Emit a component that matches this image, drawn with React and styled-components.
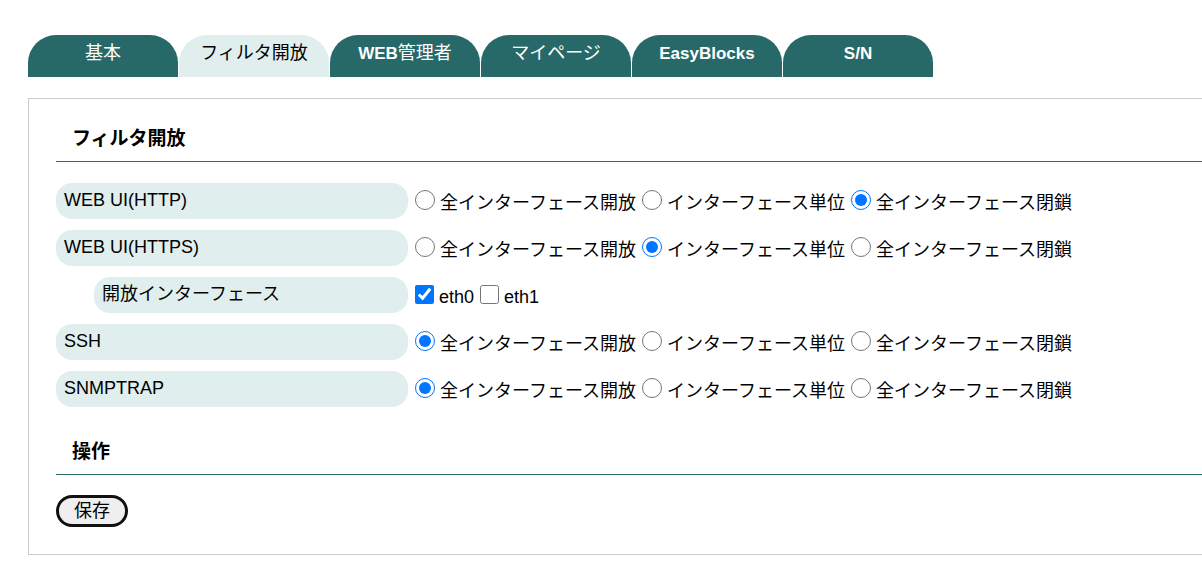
import React from "react";
import styled, { createGlobalStyle } from "styled-components";

const Global = createGlobalStyle`
  html, body { margin: 0; padding: 0; background: #fff; overflow: hidden; }
  body {
    font-family: "Liberation Sans", "Noto Sans CJK JP", sans-serif;
    color: #000;
  }
`;

const Page = styled.div`
  padding: 35px 0 0 28px;
  overflow: hidden;
`;

const TabBar = styled.div`
  display: flex;
  gap: 1px;
`;

const Tab = styled.div`
  width: 150px;
  height: 42px;
  box-sizing: border-box;
  padding-top: 8px;
  border-radius: 28px 28px 0 0;
  text-align: center;
  font-size: 18px;
  line-height: 21px;
  background: ${(p) => (p.$active ? "#e0eeed" : "#266968")};
  color: ${(p) => (p.$active ? "#000" : "#fff")};
`;

const Latin = styled.span`
  font-weight: bold;
  font-size: 17px;
`;

const Panel = styled.div`
  margin-top: 21px;
  border: 1px solid #cccccc;
  border-right: none;
  padding: 0 0 27px 27px;
  box-sizing: border-box;
`;

const Heading = styled.h2`
  margin: ${(p) => p.$top}px 0 ${(p) => p.$bottom}px;
  padding: 0 16px 11px;
  font-size: 19px;
  line-height: 22px;
  font-weight: bold;
  border-bottom: 1px solid #2b6f6c;
`;

const Rows = styled.div`
  display: flex;
  flex-direction: column;
  gap: 11px;
`;

const Row = styled.div`
  display: flex;
  align-items: flex-start;
  gap: 7px;
`;

const Label = styled.div`
  width: ${(p) => (p.$indent ? 314 : 352)}px;
  margin-left: ${(p) => (p.$indent ? 38 : 0)}px;
  height: 36px;
  flex-shrink: 0;
  box-sizing: border-box;
  padding: 6px 8px 0;
  border-radius: 16px;
  background: #e0eeed;
  font-size: 18px;
  line-height: 22px;
`;

const Options = styled.div`
  display: flex;
  gap: 6px;
  padding-top: 9px;
  font-size: 18px;
  line-height: 22px;
  white-space: nowrap;
`;

const Option = styled.label`
  display: flex;
  align-items: flex-start;
  gap: 5px;
`;

const Radio = styled.input.attrs({ type: "radio" })`
  width: 20px;
  height: 20px;
  margin: -2px 0 0 0;
`;

const Check = styled.input.attrs({ type: "checkbox" })`
  width: 19px;
  height: 19px;
  margin: -1px 0 0 0;
`;

const SaveButton = styled.button`
  width: 72px;
  height: 32px;
  border: 3px solid #111;
  border-radius: 16px;
  background: #efefef;
  font-family: "Liberation Sans", "Noto Sans CJK JP", sans-serif;
  font-size: 18px;
  line-height: 20px;
  padding: 0;
  color: #000;
`;

const modes = ["全インターフェース開放", "インターフェース単位", "全インターフェース閉鎖"];

function RadioRow({ name, label, value }) {
  return (
    <Row>
      <Label>{label}</Label>
      <Options>
        {modes.map((m, i) => (
          <Option key={m}>
            <Radio name={name} defaultChecked={i === value} />
            {m}
          </Option>
        ))}
      </Options>
    </Row>
  );
}

export default function App() {
  return (
    <>
      <Global />
      <Page>
        <TabBar>
          <Tab>基本</Tab>
          <Tab $active>フィルタ開放</Tab>
          <Tab><Latin>WEB</Latin>管理者</Tab>
          <Tab>マイページ</Tab>
          <Tab><Latin>EasyBlocks</Latin></Tab>
          <Tab><Latin>S/N</Latin></Tab>
        </TabBar>
        <Panel>
          <Heading $top={29} $bottom={21}>フィルタ開放</Heading>
          <Rows>
            <RadioRow name="http" label="WEB UI(HTTP)" value={2} />
            <RadioRow name="https" label="WEB UI(HTTPS)" value={1} />
            <Row>
              <Label $indent>開放インターフェース</Label>
              <Options>
                <Option>
                  <Check defaultChecked />
                  eth0
                </Option>
                <Option>
                  <Check />
                  eth1
                </Option>
              </Options>
            </Row>
            <RadioRow name="ssh" label="SSH" value={0} />
            <RadioRow name="snmp" label="SNMPTRAP" value={0} />
          </Rows>
          <Heading $top={34} $bottom={20}>操作</Heading>
          <SaveButton>保存</SaveButton>
        </Panel>
      </Page>
    </>
  );
}
